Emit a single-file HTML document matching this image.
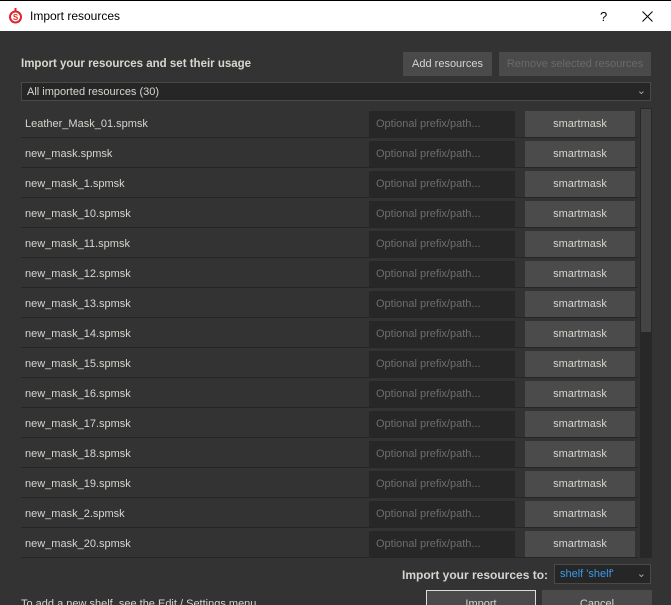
<!DOCTYPE html><html><head><style>
*{margin:0;padding:0;box-sizing:border-box}
html,body{width:671px;height:605px;overflow:hidden}
body{background:#333;font-family:"Liberation Sans",sans-serif;font-size:11px;color:#d6d6d0;position:relative}
.a{position:absolute}
.tb{left:0;top:0;width:671px;height:31px;background:#fff;border-top:1px solid #000;color:#000;font-size:12px}
.row{left:21px;width:617px;height:30px;border-bottom:1px solid #262626}
.row .n{position:absolute;left:4px;top:10px}
.row .i{position:absolute;left:348px;top:3px;width:146px;height:26px;background:#272727;color:#6e6e6e;padding:7px 7px}
.row .b{position:absolute;left:504px;top:3px;width:110px;height:26px;background:#4b4b4b;text-align:center;padding-top:7px}
.btn{background:#4a4a4a;text-align:center}
</style></head><body>
<div class="a tb">
<svg class="a" style="left:8px;top:7px" width="15" height="16" viewBox="0 0 15 16"><circle cx="7.5" cy="9" r="5.5" fill="none" stroke="#e0242a" stroke-width="2"/><rect x="6.5" y="0" width="2" height="3" fill="#e0242a"/><text x="7.5" y="12" font-size="8" font-weight="bold" text-anchor="middle" fill="#e0242a" font-family="Liberation Sans">S</text></svg>
<span class="a" style="left:30px;top:8px">Import resources</span>
<span class="a" style="left:600px;top:8px;font-size:13px">?</span>
<svg class="a" style="left:642px;top:10px" width="11" height="11" viewBox="0 0 11 11"><path d="M0.5 0.5L10.5 10.5M10.5 0.5L0.5 10.5" stroke="#000" stroke-width="1"/></svg>
</div>
<div class="a" style="left:21px;top:58px;font-weight:bold;font-size:11.5px;color:#d8d8d0">Import your resources and set their usage</div>
<div class="a btn" style="left:403px;top:52px;width:89px;height:24px;padding-top:6px">Add resources</div>
<div class="a btn" style="left:499px;top:52px;width:152px;height:24px;padding-top:6px;color:#6a6a6a">Remove selected resources</div>
<div class="a" style="left:21px;top:82px;width:630px;height:19px;background:#262626;border:1px solid #4a4a4a;padding:3px 5px">All imported resources (30)<span class="a" style="right:4px;top:1px;color:#aaa">⌄</span></div>
<div class="a" style="left:640px;top:108px;width:12px;height:450px;background:#282828"></div>
<div class="a" style="left:641px;top:109px;width:10px;height:223px;background:#444"></div>
<div id="rows"></div>
<script>
var names=["Leather_Mask_01.spmsk","new_mask.spmsk","new_mask_1.spmsk","new_mask_10.spmsk","new_mask_11.spmsk","new_mask_12.spmsk","new_mask_13.spmsk","new_mask_14.spmsk","new_mask_15.spmsk","new_mask_16.spmsk","new_mask_17.spmsk","new_mask_18.spmsk","new_mask_19.spmsk","new_mask_2.spmsk","new_mask_20.spmsk"];
var h="";names.forEach(function(n,i){h+='<div class="a row" style="top:'+(108+30*i)+'px"><span class="n">'+n+'</span><div class="i">Optional prefix/path...</div><div class="b">smartmask</div></div>';});
document.getElementById("rows").innerHTML=h;
</script>
<div class="a" style="left:402px;top:568px;font-weight:bold;font-size:12px">Import your resources to:</div>
<div class="a" style="left:554px;top:564px;width:97px;height:20px;background:#262626;border:1px solid #4a4a4a;color:#3a9bf0;padding:3px 5px">shelf 'shelf'<span class="a" style="right:4px;top:2px;color:#aaa">⌄</span></div>
<div class="a" style="left:21px;top:598px">To add a new shelf, see the Edit / Settings menu</div>
<div class="a btn" style="left:426px;top:590px;width:110px;height:24px;border:1px solid #ddd;padding-top:7px">Import</div>
<div class="a btn" style="left:542px;top:590px;width:110px;height:24px;padding-top:8px">Cancel</div>
</body></html>
